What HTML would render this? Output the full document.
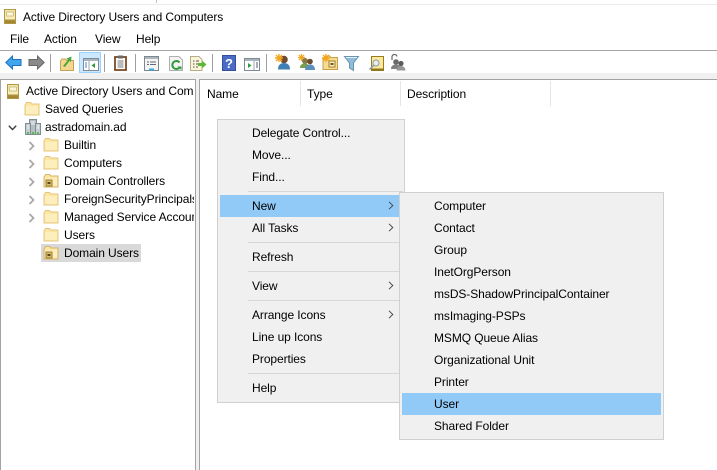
<!DOCTYPE html>
<html><head><meta charset="utf-8">
<style>
html,body{margin:0;padding:0;background:#fff}
#p{position:relative;width:717px;height:470px;overflow:hidden;background:#fff;font:12px "Liberation Sans",sans-serif;color:#000}
.t{position:absolute;white-space:nowrap;line-height:16px;height:16px;letter-spacing:-.09px}
.b{position:absolute}
svg.i{position:absolute;overflow:visible}
</style></head><body><div id="p">
<svg width="0" height="0" style="position:absolute">
<symbol id="f" viewBox="0 0 16 14"><path d="M1 3V13H15V2H8L6.500 .5H2.500Z" fill="#fbe6a4" stroke="#e6c67c"/><path d="M2 4H14V12H2Z" fill="#fdeebd"/></symbol>
<symbol id="ou" viewBox="0 0 16 14"><path d="M1 3V13H15V2H8L6.500 .5H2.500Z" fill="#fbe6a4" stroke="#d6b468"/><path d="M2 4H14V12H2Z" fill="#fdeebd"/><path d="M3 6H9V12H3Z" fill="#d8bb6c" stroke="#9a8038"/><path d="M4.500 8H7.500V10H4.500Z" fill="#5a4a1a"/></symbol>
<symbol id="ch" viewBox="0 0 8 10"><path d="M1.500 1L5.500 5L1.500 9" fill="none" stroke="#a6a6a6" stroke-width="1.700"/></symbol>
<symbol id="ar" viewBox="0 0 6 9"><path d="M1 .8L4.800 4.500L1 8.200" fill="none" stroke="#4a4a4a" stroke-width="1"/></symbol>
<symbol id="us" viewBox="0 0 16 16"><circle cx="9" cy="5.500" r="3.800" fill="#6e4a2e"/><path d="M3 15.500C3 10.500 6 9 9 9S15 10.500 15 15.500Z" fill="#3f7fb5"/></symbol>
<symbol id="st" viewBox="0 0 8 8"><path d="M4 0V8M0 4H8M1 1L7 7M7 1L1 7" stroke="#f3a51d" stroke-width="1.400"/></symbol>
<linearGradient id="dg" x1="0" y1="0" x2="0" y2="1"><stop offset="0" stop-color="#efe4a8"/><stop offset=".7" stop-color="#f6eebd"/><stop offset=".72" stop-color="#b0923e"/><stop offset="1" stop-color="#9c7f2e"/></linearGradient>
</svg>

<!-- title -->
<div class="b" style="left:0;top:4px;width:717px;height:1px;background:#ececec"></div>
<div class="b" style="left:156px;top:0;width:1px;height:3px;background:#d8b8c8"></div>
<svg class="i" style="left:4px;top:9px" width="12" height="15"><rect x=".5" y=".5" width="11" height="14" fill="url(#dg)" stroke="#b09844"/><rect x="2.500" y="3" width="7" height="4" fill="#fbf6d8" stroke="#b8a55c" stroke-width=".6"/></svg>
<span class="t" style="left:23px;top:9px;letter-spacing:-.11px">Active Directory Users and Computers</span>
<span class="t" style="left:10px;top:31px">File</span>
<span class="t" style="left:44px;top:31px">Action</span>
<span class="t" style="left:95px;top:31px">View</span>
<span class="t" style="left:136px;top:31px">Help</span>

<!-- toolbar -->
<div class="b" style="left:0;top:50px;width:717px;height:1px;background:#a6a6a6"></div>
<div class="b" style="left:0;top:73px;width:717px;height:7px;background:#f0f0f0"></div>
<div class="b" style="left:50px;top:54px;width:1px;height:18px;background:#a0a0a0"></div>
<div class="b" style="left:104px;top:54px;width:1px;height:18px;background:#a0a0a0"></div>
<div class="b" style="left:135px;top:54px;width:1px;height:18px;background:#a0a0a0"></div>
<div class="b" style="left:212px;top:54px;width:1px;height:18px;background:#a0a0a0"></div>
<div class="b" style="left:266px;top:54px;width:1px;height:18px;background:#a0a0a0"></div>
<div class="b" style="left:79px;top:52px;width:20px;height:19px;background:#cce8ff;border:1px solid #99d1ff"></div>

<svg class="i" style="left:5px;top:55px" width="17" height="15"><path d="M.8 7.500L7.500 1V4.500H16V10.500H7.500V14Z" fill="#3fa6ee" stroke="#1d6fc0"/></svg>
<svg class="i" style="left:28px;top:55px" width="17" height="15"><path d="M16.200 7.500L9.500 1V4.500H1V10.500H9.500V14Z" fill="#8a8a8a" stroke="#666"/></svg>
<svg class="i" style="left:60px;top:56px" width="14" height="15"><path d="M.5 5V14.500H13.500V4.500H7L5.500 3H2Z" fill="#f4d78e" stroke="#c5a25a"/><path d="M3 10L8 4L6.500 2.500L11.500 .5L11 6L9.500 5L5 11Z" fill="#4aa83a"/></svg>
<svg class="i" style="left:83px;top:58px" width="16" height="13"><rect x=".5" y=".5" width="15" height="12" fill="#fff" stroke="#7e8a96"/><rect x="1" y="1" width="14" height="2" fill="#aab4bd"/><path d="M6 3V12" stroke="#9aa6b0"/><path d="M2 5H4M2 7H4M2 9H4" stroke="#3f86c0"/><path d="M12 5V10L8.500 7.500Z" fill="#2f9a3a"/></svg>
<svg class="i" style="left:114px;top:55px" width="13" height="16"><rect x="1" y="2" width="11" height="13" fill="#fff" stroke="#7a4a22" stroke-width="1.800"/><rect x="4" y=".5" width="5" height="3" fill="#6b6b6b"/><path d="M3.500 6H9.500M3.500 8H9.500M3.500 10H9.500M3.500 12H9.500" stroke="#777"/></svg>
<svg class="i" style="left:144px;top:56px" width="15" height="15"><rect x=".5" y=".5" width="14" height="14" fill="#f4f4f4" stroke="#7d8790"/><rect x="1" y="1" width="13" height="2" fill="#aeb6bd"/><path d="M3 6H5M6 6H12M3 8.500H5M6 8.500H12" stroke="#667"/><rect x="5" y="12.500" width="5" height="2" fill="#3aa7e0"/></svg>
<svg class="i" style="left:169px;top:56px" width="14" height="15"><path d="M.5 .5H10L13.500 4V14.500H.5Z" fill="#f4f4f4" stroke="#b0b0b0"/><path d="M10.500 6.500A4 4 0 1 0 10.500 11.500" fill="none" stroke="#2f9a3a" stroke-width="2"/><path d="M8.500 10.500H12.500V14Z" fill="#2f9a3a"/></svg>
<svg class="i" style="left:190px;top:56px" width="17" height="15"><path d="M.5 .5H9L12 3.500V14.500H.5Z" fill="#fbf5d8" stroke="#b4ad8c"/><path d="M3 5H4.500M3 8H4.500M3 11H4.500M6 5H9M6 8H8M6 11H8" stroke="#555"/><path d="M8 7H12V4.500L16.500 8.500L12 12.500V10H8Z" fill="#5cb83a"/></svg>
<svg class="i" style="left:222px;top:55px" width="14" height="16"><rect width="14" height="16" fill="#3350a0"/><rect x="1" y="1" width="12" height="14" fill="#4a6cc4"/><text x="7" y="13" text-anchor="middle" font-family="Liberation Sans" font-size="13" font-weight="bold" fill="#fff">?</text></svg>
<svg class="i" style="left:244px;top:58px" width="16" height="13"><rect x=".5" y=".5" width="15" height="12" fill="#fff" stroke="#7e8a96"/><rect x="1" y="1" width="14" height="2" fill="#aab4bd"/><path d="M10 3V12" stroke="#9aa6b0"/><path d="M12 5H14M12 7H14M12 9H14" stroke="#556"/><path d="M4 5V10L7.500 7.500Z" fill="#2f9a3a"/></svg>

<svg class="i" style="left:275px;top:54px" width="16" height="16" viewBox="0 0 16 16"><use href="#us" x="0" y="0" width="16" height="16"/><use href="#st" x="0" y="0" width="8" height="8"/></svg>
<svg class="i" style="left:298px;top:54px" width="17" height="16" viewBox="0 0 17 16"><use href="#st" x="0" y="0" width="7" height="7"/><circle cx="7" cy="7" r="3" fill="#8a7a40"/><path d="M2 14C2 10.500 4.500 9.500 7 9.500S11 11 11 14Z" fill="#76a050"/><circle cx="12" cy="7.500" r="2.800" fill="#6b4c30"/><path d="M7 16C7 12 9.500 10.500 12 10.500S17 12 17 16Z" fill="#5b8fbc"/></svg>
<svg class="i" style="left:322px;top:54px" width="16" height="16"><path d="M1 5V15.500H15.500V3.500H9L7.500 2H4Z" fill="#f7db8e" stroke="#c79f4a"/><rect x="7" y="7" width="6" height="6" fill="#fff0c0" stroke="#9a7c30"/><rect x="8.500" y="9" width="3" height="2" fill="#6b5520"/><use href="#st" x="0" y="0" width="8" height="8"/></svg>
<svg class="i" style="left:344px;top:56px" width="15" height="15"><path d="M.5 .5H14.500L9.500 7V14.500L5.500 12V7Z" fill="#8fbcd8" stroke="#6a93ad"/><path d="M2 1.500H13" stroke="#e4f2fa"/></svg>
<svg class="i" style="left:368px;top:56px" width="16" height="15"><rect x="3.500" y=".5" width="12" height="14" fill="#fbe9a0" stroke="#9a7c1a"/><rect x="3" y="12.500" width="13" height="2" fill="#8f7518"/><circle cx="8" cy="7" r="3" fill="#e8eef2" stroke="#8c9aa4"/><path d="M5.800 9.200L1.500 13.500" stroke="#8c9aa4" stroke-width="1.500"/></svg>
<svg class="i" style="left:390px;top:54px" width="16" height="17"><path d="M2 6V3.500A2.500 2.500 0 0 1 7 2.500" fill="none" stroke="#666" stroke-width="1.200"/><circle cx="6" cy="8" r="2.800" fill="#6a6a6a"/><path d="M1 15C1 11.500 3.500 10.500 6 10.500S11 12 11 15Z" fill="#808080"/><circle cx="11" cy="9.500" r="2.600" fill="#5c5c5c"/><path d="M6.500 16.500C6.500 13.500 9 12 11 12S15.500 13.500 15.500 16.500Z" fill="#969696"/></svg>

<!-- panes -->
<div class="b" style="left:196px;top:80px;width:3px;height:390px;background:#f0f0f0"></div>
<div class="b" style="left:0;top:79px;width:196px;height:1px;background:#a3a3a3"></div>
<div class="b" style="left:199px;top:79px;width:518px;height:1px;background:#a3a3a3"></div>
<div class="b" style="left:0;top:79px;width:1px;height:391px;background:#a3a3a3"></div>
<div class="b" style="left:195px;top:79px;width:1px;height:391px;background:#a3a3a3"></div>
<div class="b" style="left:199px;top:79px;width:1px;height:391px;background:#a3a3a3"></div>

<!-- tree -->
<svg class="i" style="left:7px;top:84px" width="12" height="15"><rect x=".5" y=".5" width="11" height="14" fill="url(#dg)" stroke="#b09844"/><rect x="2.500" y="3" width="7" height="4" fill="#fbf6d8" stroke="#b8a55c" stroke-width=".6"/></svg>
<span class="t" style="left:26px;top:83px;width:168px;overflow:hidden;letter-spacing:-.11px">Active Directory Users and Computers</span>
<svg class="i" style="left:24px;top:102px" width="16" height="14"><use href="#f" width="16" height="14"/></svg>
<span class="t" style="left:45px;top:101px">Saved Queries</span>
<svg class="i" style="left:8px;top:125px" width="9" height="6"><path d="M.8 .8L4.500 4.500L8.200 .8" fill="none" stroke="#3c3c3c" stroke-width="1.400"/></svg>
<svg class="i" style="left:25px;top:119px" width="16" height="16"><rect x="4.500" y=".5" width="7" height="15" fill="#b4c0c6" stroke="#7f8c92"/><rect x=".5" y="4.500" width="5" height="11" fill="#c4ced3" stroke="#7f8c92"/><rect x="10.500" y="4.500" width="5" height="11" fill="#c4ced3" stroke="#7f8c92"/><path d="M6 3H10M6 5H10M2 7H4M12 7H14M2 9H4M12 9H14" stroke="#f4f4f4"/><rect x="2" y="13" width="2" height="2" fill="#4ec24e"/><rect x="7" y="13" width="2" height="2" fill="#4ec24e"/><rect x="12" y="13" width="2" height="2" fill="#4ec24e"/></svg>
<span class="t" style="left:45px;top:119px">astradomain.ad</span>

<svg class="i" style="left:28px;top:141px" width="8" height="10"><use href="#ch" width="8" height="10"/></svg>
<svg class="i" style="left:43px;top:138px" width="16" height="14"><use href="#f" width="16" height="14"/></svg>
<span class="t" style="left:64px;top:137px">Builtin</span>
<svg class="i" style="left:28px;top:159px" width="8" height="10"><use href="#ch" width="8" height="10"/></svg>
<svg class="i" style="left:43px;top:156px" width="16" height="14"><use href="#f" width="16" height="14"/></svg>
<span class="t" style="left:64px;top:155px">Computers</span>
<svg class="i" style="left:28px;top:177px" width="8" height="10"><use href="#ch" width="8" height="10"/></svg>
<svg class="i" style="left:43px;top:174px" width="16" height="14"><use href="#ou" width="16" height="14"/></svg>
<span class="t" style="left:64px;top:173px">Domain Controllers</span>
<svg class="i" style="left:28px;top:195px" width="8" height="10"><use href="#ch" width="8" height="10"/></svg>
<svg class="i" style="left:43px;top:192px" width="16" height="14"><use href="#f" width="16" height="14"/></svg>
<span class="t" style="left:64px;top:191px;width:130px;overflow:hidden">ForeignSecurityPrincipals</span>
<svg class="i" style="left:28px;top:213px" width="8" height="10"><use href="#ch" width="8" height="10"/></svg>
<svg class="i" style="left:43px;top:210px" width="16" height="14"><use href="#f" width="16" height="14"/></svg>
<span class="t" style="left:64px;top:209px;width:130px;overflow:hidden">Managed Service Accounts</span>
<svg class="i" style="left:43px;top:228px" width="16" height="14"><use href="#f" width="16" height="14"/></svg>
<span class="t" style="left:64px;top:227px">Users</span>
<div class="b" style="left:41px;top:244px;width:100px;height:18px;background:#d9d9d9"></div>
<svg class="i" style="left:43px;top:246px" width="16" height="14"><use href="#ou" width="16" height="14"/></svg>
<span class="t" style="left:64px;top:245px">Domain Users</span>

<!-- list header -->
<span class="t" style="left:207px;top:86px">Name</span>
<span class="t" style="left:307px;top:86px">Type</span>
<span class="t" style="left:407px;top:86px">Description</span>
<div class="b" style="left:300px;top:81px;width:1px;height:25px;background:#e5e5e5"></div>
<div class="b" style="left:400px;top:81px;width:1px;height:25px;background:#e5e5e5"></div>
<div class="b" style="left:550px;top:81px;width:1px;height:25px;background:#e5e5e5"></div>

<!-- context menu -->
<div class="b" style="left:217px;top:119px;width:188px;height:284px;box-sizing:border-box;background:#f0f0f0;border:1px solid #d0d0d0"></div>
<div class="b" style="left:248px;top:191px;width:155px;height:1px;background:#d7d7d7"></div>
<div class="b" style="left:248px;top:242px;width:151px;height:1px;background:#d7d7d7"></div>
<div class="b" style="left:248px;top:271px;width:151px;height:1px;background:#d7d7d7"></div>
<div class="b" style="left:248px;top:300px;width:151px;height:1px;background:#d7d7d7"></div>
<div class="b" style="left:248px;top:373px;width:151px;height:1px;background:#d7d7d7"></div>
<div class="b" style="left:220px;top:195px;width:180px;height:22px;background:#91c9f7"></div>
<span class="t" style="left:252px;top:125px">Delegate Control...</span>
<span class="t" style="left:252px;top:147px">Move...</span>
<span class="t" style="left:252px;top:169px">Find...</span>
<span class="t" style="left:252px;top:198px">New</span>
<span class="t" style="left:252px;top:220px">All Tasks</span>
<span class="t" style="left:252px;top:249px">Refresh</span>
<span class="t" style="left:252px;top:278px">View</span>
<span class="t" style="left:252px;top:307px">Arrange Icons</span>
<span class="t" style="left:252px;top:329px">Line up Icons</span>
<span class="t" style="left:252px;top:351px">Properties</span>
<span class="t" style="left:252px;top:380px">Help</span>
<svg class="i" style="left:388px;top:201px" width="6" height="9"><use href="#ar" width="6" height="9"/></svg>
<svg class="i" style="left:388px;top:223px" width="6" height="9"><use href="#ar" width="6" height="9"/></svg>
<svg class="i" style="left:388px;top:281px" width="6" height="9"><use href="#ar" width="6" height="9"/></svg>
<svg class="i" style="left:388px;top:310px" width="6" height="9"><use href="#ar" width="6" height="9"/></svg>

<!-- submenu -->
<div class="b" style="left:399px;top:192px;width:265px;height:248px;box-sizing:border-box;background:#f0f0f0;border:1px solid #d0d0d0"></div>
<div class="b" style="left:402px;top:393px;width:259px;height:22px;background:#91c9f7"></div>
<span class="t" style="left:434px;top:198px">Computer</span>
<span class="t" style="left:434px;top:220px">Contact</span>
<span class="t" style="left:434px;top:242px">Group</span>
<span class="t" style="left:434px;top:264px">InetOrgPerson</span>
<span class="t" style="left:434px;top:286px">msDS-ShadowPrincipalContainer</span>
<span class="t" style="left:434px;top:308px">msImaging-PSPs</span>
<span class="t" style="left:434px;top:330px">MSMQ Queue Alias</span>
<span class="t" style="left:434px;top:352px">Organizational Unit</span>
<span class="t" style="left:434px;top:374px">Printer</span>
<span class="t" style="left:434px;top:396px">User</span>
<span class="t" style="left:434px;top:418px">Shared Folder</span>
</div></body></html>
